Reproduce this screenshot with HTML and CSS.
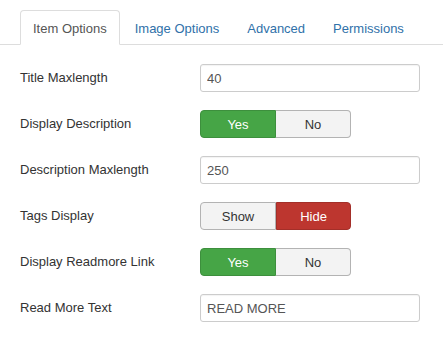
FILE: index.html
```html
<!DOCTYPE html>
<html>
<head>
  <title>Item Options</title>
  <link rel="stylesheet" href="styles.css">
</head>
<body>
  <ul class="abas">
    <li class="aba ativa"><a href="#">Item Options</a></li>
    <li class="aba"><a href="#">Image Options</a></li>
    <li class="aba"><a href="#">Advanced</a></li>
    <li class="aba"><a href="#">Permissions</a></li>
  </ul>

  <div class="formulario">
    <div class="linha">
      <label class="rotulo">Title Maxlength</label>
      <input class="campo" type="text" value="40">
    </div>
    <div class="linha">
      <label class="rotulo">Display Description</label>
      <div class="grupo-botoes">
        <button class="botao sim ativo">Yes</button>
        <button class="botao nao">No</button>
      </div>
    </div>
    <div class="linha">
      <label class="rotulo">Description Maxlength</label>
      <input class="campo" type="text" value="250">
    </div>
    <div class="linha">
      <label class="rotulo">Tags Display</label>
      <div class="grupo-botoes">
        <button class="botao sim">Show</button>
        <button class="botao nao oculto">Hide</button>
      </div>
    </div>
    <div class="linha">
      <label class="rotulo">Display Readmore Link</label>
      <div class="grupo-botoes">
        <button class="botao sim ativo">Yes</button>
        <button class="botao nao">No</button>
      </div>
    </div>
    <div class="linha">
      <label class="rotulo">Read More Text</label>
      <input class="campo" type="text" value="READ MORE">
    </div>
  </div>
</body>
</html>
```

FILE: styles.css
```css
/* Base */
body {
  margin: 0;
  background-color: #fff;
  color: #333;
  font-family: "Liberation Sans", Arial, sans-serif;
  font-size: 13px;
  line-height: 18px;
}

/* Abas */
.abas {
  list-style: none;
  display: flex;
  margin: 0;
  padding: 10px 0 0 20px;
  border-bottom: 1px solid #ddd;
}

.aba {
  margin-right: 2px;
  margin-bottom: -1px;
}

.aba a {
  display: block;
  padding: 9px 12px 6px;
  border: 1px solid transparent;
  border-radius: 4px 4px 0 0;
  color: #3071a9;
  text-decoration: none;
}

.aba.ativa a {
  color: #555;
  background-color: #fff;
  border-color: #ddd #ddd transparent #ddd;
}

/* Formulario */
.formulario {
  padding: 19px 0 0 20px;
}

.linha {
  display: flex;
  align-items: flex-start;
  margin-bottom: 18px;
}

.rotulo {
  width: 180px;
  flex-shrink: 0;
  padding-top: 5px;
}

.campo {
  box-sizing: border-box;
  width: 220px;
  height: 28px;
  padding: 4px 6px;
  border: 1px solid #ccc;
  border-radius: 3px;
  font-family: inherit;
  font-size: 13px;
  color: #555;
  box-shadow: inset 0 1px 1px rgba(0, 0, 0, 0.05);
}

.grupo-botoes {
  display: flex;
}

.botao {
  box-sizing: border-box;
  height: 28px;
  padding: 4px 12px;
  font-family: inherit;
  font-size: 13px;
  color: #333;
  background-color: #f3f3f3;
  border: 1px solid #b3b3b3;
  cursor: pointer;
}

.botao.sim {
  width: 76px;
  border-radius: 4px 0 0 4px;
}

.botao.nao {
  width: 75px;
  border-left: none;
  border-radius: 0 4px 4px 0;
}

.botao.ativo {
  background-color: #46a546;
  border-color: #3d8f3d;
  color: #fff;
}

.botao.oculto {
  background-color: #bd362f;
  border: 1px solid #a32f29;
  color: #fff;
}
```
